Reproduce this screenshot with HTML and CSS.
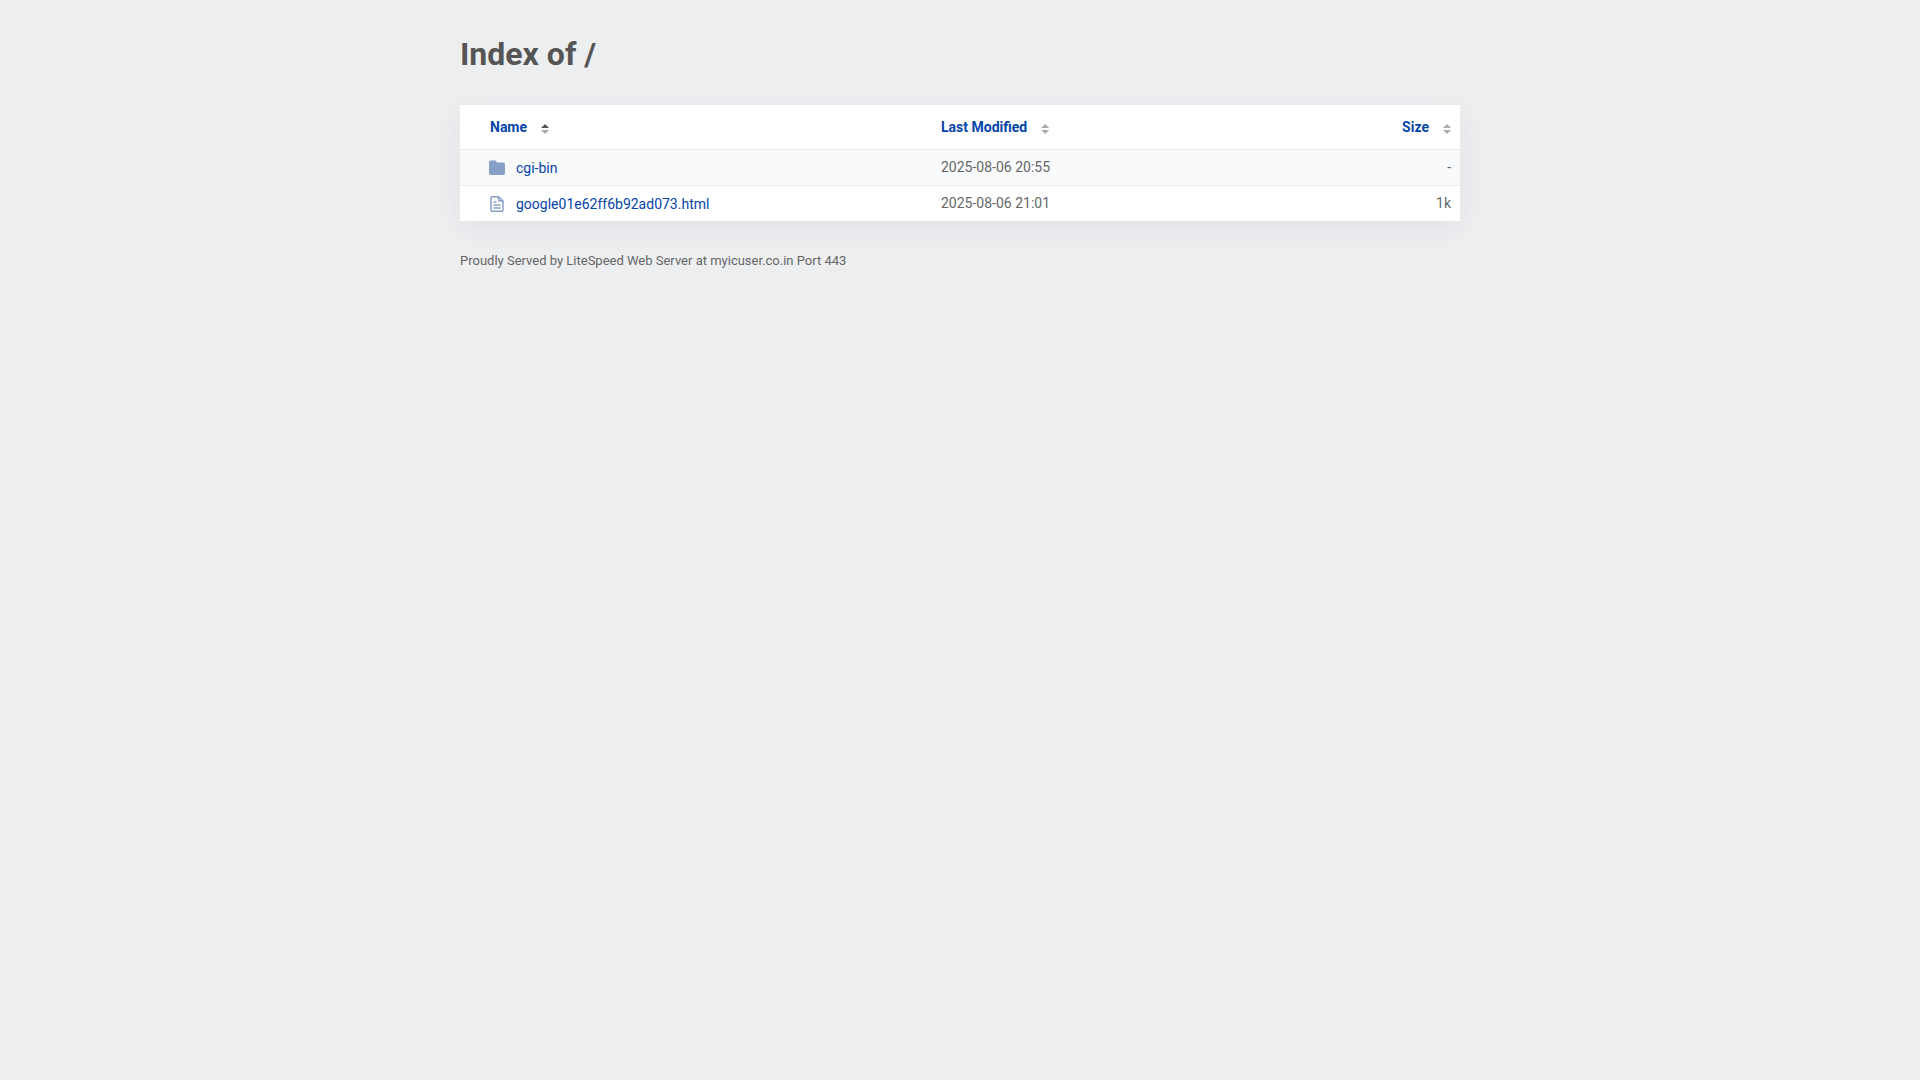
FILE: index.html
```html
<!DOCTYPE html>
<html lang="en">
<head>
    <meta charset="UTF-8">
    <meta name="viewport" content="width=device-width, initial-scale=1.0">
    <title>Index of /</title>
    <link rel="stylesheet" href="styles.css">
</head>
<body>

<div class="content">
    <h1>Index of /</h1>

    <table class="listing">
        <thead>
            <tr>
                <th class="col-name"><a href="#">Name</a><span class="sort sort-up"></span></th>
                <th class="col-date"><a href="#">Last Modified</a><span class="sort"></span></th>
                <th class="col-size"><a href="#">Size</a><span class="sort"></span></th>
            </tr>
        </thead>
        <tbody>
            <tr>
                <td class="col-name">
                    <a href="#">
                        <svg class="icon" viewBox="0 0 16 16"><path fill="#86a0c8" d="M2 .5h4q.8 0 1.200.7L8 2.500h6.200A1.800 1.800 0 0 1 16 4.300v8.900a1.800 1.800 0 0 1-1.800 1.800H1.800A1.800 1.800 0 0 1 0 13.200V2.300A1.800 1.800 0 0 1 2 .5z"/></svg>
                        cgi-bin
                    </a>
                </td>
                <td class="col-date">2025-08-06 20:55</td>
                <td class="col-size">-</td>
            </tr>
            <tr>
                <td class="col-name">
                    <a href="#">
                        <svg class="icon" viewBox="0 0 16 16"><path fill="none" stroke="#86a0c8" stroke-width="1.500" d="M9.500.7H3.500A1.500 1.500 0 0 0 2 2.200v11.600a1.500 1.500 0 0 0 1.500 1.500h9a1.500 1.500 0 0 0 1.500-1.500V5L9.500.7v3.100A1.200 1.200 0 0 0 10.700 5H14M4.500 6h3M4.500 9h7M4.500 12h7"/></svg>
                        google01e62ff6b92ad073.html
                    </a>
                </td>
                <td class="col-date">2025-08-06 21:01</td>
                <td class="col-size">1k</td>
            </tr>
        </tbody>
    </table>

    <footer>Proudly Served by LiteSpeed Web Server at myicuser.co.in Port 443</footer>
</div>

</body>
</html>
```
FILE: styles.css
```css
body {
    margin: 0;
    background-color: #edeef0;
    font-family: Roboto, Arial, sans-serif;
    font-size: 14px;
    line-height: 20px;
    color: #666;
}

.content {
    max-width: 1000px;
    margin: 0 auto;
    padding: 32px 20px;
}

h1 {
    margin: 0 0 29px;
    font-size: 32px;
    line-height: 44px;
    color: #555;
}

a {
    color: #0445a8;
    text-decoration: none;
}

a:hover {
    text-decoration: underline;
}

.listing {
    width: 100%;
    table-layout: fixed;
    border-collapse: separate;
    border-spacing: 0;
    background-color: #fff;
    box-shadow: 0 7px 24px rgba(0, 50, 60, 0.06);
}

th,
td {
    padding: 7px 9px 8px;
    text-align: left;
    border-top: 1px solid #e8eaee;
}

th {
    padding: 12px 9px;
    border-top: none;
}

td.col-name {
    padding-top: 8px;
    padding-bottom: 7px;
}

tbody tr:nth-child(odd) {
    background-color: #f9fafc;
}

.col-name {
    width: 433px;
    padding-left: 30px;
}

.col-size {
    width: 80px;
    text-align: right;
}

td.col-name a {
    display: flex;
    align-items: center;
}

.icon {
    width: 16px;
    height: 16px;
    margin: 0 11px 0 -1px;
}

/* Sort arrows next to the column titles */
.sort {
    display: inline-block;
    width: 8px;
    height: 10px;
    margin-left: 14px;
    vertical-align: -2px;
    background-color: #aaa;
    clip-path: polygon(0 40%, 50% 0, 100% 40%, 0 40%, 0 60%, 100% 60%, 50% 100%, 0 60%);
}

.sort-up {
    background: linear-gradient(#555 50%, #aaa 50%);
}

footer {
    padding-top: 30px;
    font-size: 13px;
}
```
